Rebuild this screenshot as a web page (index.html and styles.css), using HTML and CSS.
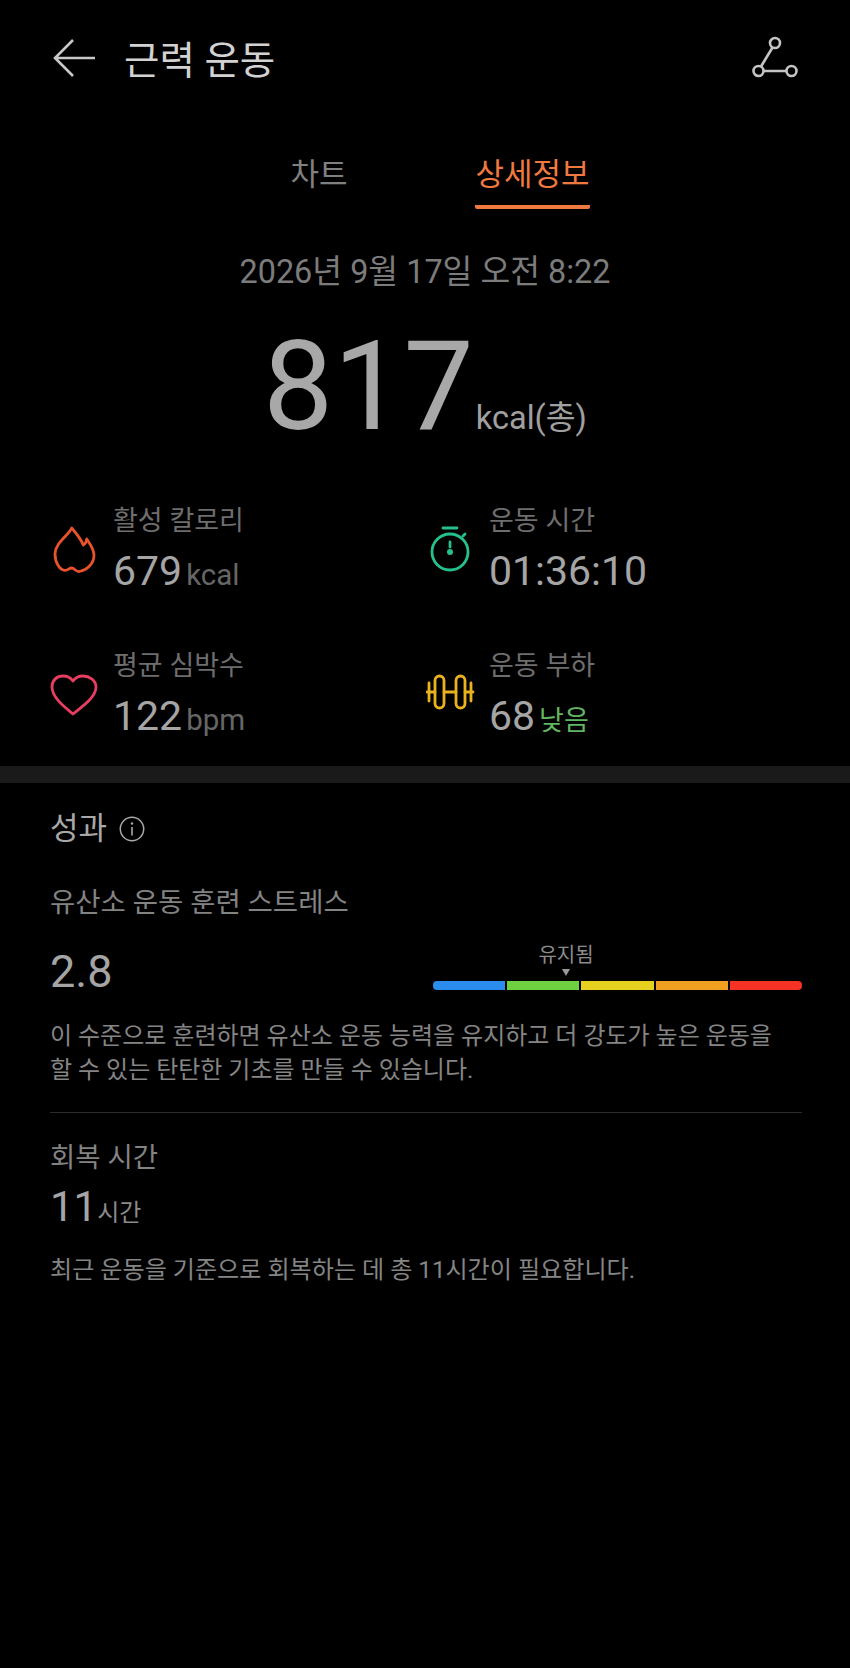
FILE: index.html
```html
<!DOCTYPE html>
<html lang="ko">
<head>
<meta charset="utf-8">
<title>근력 운동</title>
<link rel="stylesheet" href="styles.css">
</head>
<body>
<header class="topbar">
	<svg class="back" width="44" height="40" viewBox="0 0 44 40"><path d="M20 2 L2 20 L20 38 M2 20 H42" fill="none" stroke="#c8c8c8" stroke-width="2.6"/></svg>
	<h1 class="title">근력 운동</h1>
	<svg class="route" width="48" height="44" viewBox="0 0 48 44"><g fill="none" stroke="#c4c4c4" stroke-width="2.6"><circle cx="23" cy="7" r="5"/><circle cx="6.500" cy="35" r="5"/><circle cx="39.500" cy="35" r="5"/><path d="M20.500 11.500 L9 30.500 M11.500 35 H34.500"/></g></svg>
</header>
<nav class="tabs">
	<span class="tab">차트</span>
	<span class="tab tab-on">상세정보</span>
</nav>
<div class="date">2026년 9월 17일 오전 8:22</div>
<div class="total"><span class="total-num">817</span><span class="total-unit">kcal(총)</span></div>
<section class="stats">
	<div class="stat">
		<svg class="stat-icon" width="50" height="54" viewBox="0 0 50 54"><path d="M21.700 4 C19 11 5 19 5 30 C5 39 10 46 15 46.300 C18 46.500 19 44 21.700 44 C24.500 44 26 48 29.300 47.500 C37 46 44 40 44 31 C44 25 40 20 36.700 15 C36.500 18 35 20 33.300 21 C31 15 26 9 21.700 4Z" fill="none" stroke="#e8532b" stroke-width="2.800" stroke-linejoin="round"/></svg>
		<div>
			<div class="stat-label">활성 칼로리</div>
			<div class="stat-value">679<span class="stat-unit">kcal</span></div>
		</div>
	</div>
	<div class="stat">
		<svg class="stat-icon" width="50" height="54" viewBox="0 0 50 54"><g fill="none" stroke="#25c08e" stroke-width="2.800" stroke-linecap="round"><circle cx="24" cy="28" r="18"/><path d="M17 4 H31 M37 12 L39 10 M24 18 V23"/></g><circle cx="24" cy="28" r="3" fill="#25c08e"/></svg>
		<div>
			<div class="stat-label">운동 시간</div>
			<div class="stat-value">01:36:10</div>
		</div>
	</div>
	<div class="stat">
		<svg class="stat-icon" width="50" height="54" viewBox="0 0 50 54"><path d="M23 45 C16 39 2 29 2 18 C2 11 7 7 13 7 C17 7 21 9 23 12 C25 9 29 7 33 7 C39 7 46 11 46 18 C46 29 30 39 23 45Z" fill="none" stroke="#e63d60" stroke-width="2.800" stroke-linejoin="round"/></svg>
		<div>
			<div class="stat-label">평균 심박수</div>
			<div class="stat-value">122<span class="stat-unit">bpm</span></div>
		</div>
	</div>
	<div class="stat">
		<svg class="stat-icon" width="50" height="54" viewBox="0 0 50 54"><g fill="none" stroke="#eab21e" stroke-width="2.800" stroke-linecap="round"><rect x="9" y="7" width="9" height="32" rx="4.500"/><rect x="30" y="7" width="9" height="32" rx="4.500"/><path d="M18 23 H30 M3 14 V32 M45 14 V32 M1 23 H3 M45 23 H47 M3 23 H9 M39 23 H45"/></g></svg>
		<div>
			<div class="stat-label">운동 부하</div>
			<div class="stat-value">68<span class="stat-level">낮음</span></div>
		</div>
	</div>
</section>
<div class="band"></div>
<section class="perf">
	<div class="perf-head">
		<h2 class="perf-title">성과</h2>
		<svg width="26" height="26" viewBox="0 0 26 26"><circle cx="13" cy="13" r="11.700" fill="none" stroke="#a8a8a8" stroke-width="1.500"/><path d="M13 11 V19.500" stroke="#a8a8a8" stroke-width="1.600"/><circle cx="13" cy="7.500" r="1.200" fill="#a8a8a8"/></svg>
	</div>
	<div class="perf-label">유산소 운동 훈련 스트레스</div>
	<div class="load">
		<div class="load-num">2.8</div>
		<div class="scale">
			<div class="scale-marker">
				<span class="scale-text">유지됨</span>
				<span class="scale-arrow"></span>
			</div>
			<div class="scale-bar">
				<span class="seg seg-blue"></span>
				<span class="seg seg-green"></span>
				<span class="seg seg-yellow"></span>
				<span class="seg seg-orange"></span>
				<span class="seg seg-red"></span>
			</div>
		</div>
	</div>
	<p class="note">이 수준으로 훈련하면 유산소 운동 능력을 유지하고 더 강도가 높은 운동을<br>할 수 있는 탄탄한 기초를 만들 수 있습니다.</p>
	<div class="rule"></div>
	<div class="perf-label recover-label">회복 시간</div>
	<div class="recover"><span class="recover-num">11</span><span class="recover-unit">시간</span></div>
	<p class="note recover-note">최근 운동을 기준으로 회복하는 데 총 11시간이 필요합니다.</p>
</section>
</body>
</html>
```

FILE: styles.css
```css
*{
	margin: 0;
	padding: 0;
	box-sizing: border-box;
}
html,body{
	background: #000;
}
body{
	width: 850px;
	height: 1668px;
	overflow: hidden;
	font-family: Roboto, "Noto Sans CJK KR", sans-serif;
	color: #a8a8a8;
}
.topbar{
	height: 116px;
	padding: 0 50px 0 53px;
	display: flex;
	align-items: center;
}
.title{
	margin: 0 0 3px 27px;
	font-size: 38.500px;
	font-weight: 400;
	color: #d2d2d2;
}
.route{
	margin-left: auto;
}
.tabs{
	margin-top: 24px;
	display: flex;
	justify-content: center;
	gap: 128px;
	padding-left: 30px;
}
.tab{
	font-size: 31px;
	line-height: 69px;
	height: 69px;
	color: #808080;
}
.tab-on{
	color: #f0793f;
	border-bottom: 4px solid #f0793f;
	border-radius: 0 0 2px 2px;
}
.date{
	margin-top: 41px;
	text-align: center;
	font-size: 32.400px;
	line-height: 44px;
	color: #7c7c7c;
}
.total{
	margin-top: 18px;
	height: 149px;
	display: flex;
	justify-content: center;
	align-items: baseline;
}
.total-num{
	font-size: 125px;
	font-weight: 400;
	line-height: 150px;
	color: #a8a8a8;
}
.total-unit{
	margin-left: 2px;
	font-size: 32.500px;
	color: #a0a0a0;
}
.stats{
	margin-top: 40px;
	padding-left: 50px;
	display: grid;
	grid-template-columns: 376px 1fr;
	row-gap: 45px;
}
.stat{
	display: flex;
	align-items: center;
	gap: 13px;
}
.stat-label{
	font-size: 27px;
	line-height: 40px;
	color: #6e6e6e;
}
.stat-value{
	height: 60px;
	display: flex;
	align-items: baseline;
	font-size: 41px;
	line-height: 60px;
	color: #a5a5a5;
}
.stat-unit{
	margin-left: 4px;
	font-size: 29.500px;
	color: #666;
}
.stat-level{
	margin-left: 4px;
	font-size: 27px;
	color: #62b562;
}
.band{
	margin-top: 20px;
	height: 17px;
	background: #1a1a1a;
}
.perf{
	padding: 0 48px 0 50px;
}
.perf-head{
	margin-top: 26px;
	display: flex;
	align-items: center;
	gap: 12px;
}
.perf-title{
	font-size: 31px;
	line-height: 40px;
	font-weight: 400;
	color: #a8a8a8;
}
.perf-label{
	margin-top: 34px;
	font-size: 27.500px;
	line-height: 40px;
	color: #838383;
}
.load{
	display: flex;
	justify-content: space-between;
	align-items: flex-start;
	margin-top: 18px;
}
.load-num{
	font-size: 45px;
	line-height: 62px;
	color: #a5a5a5;
}
.scale{
	width: 369px;
}
.scale-marker{
	margin-left: 100px;
	width: 66px;
	display: flex;
	flex-direction: column;
	align-items: center;
}
.scale-text{
	font-size: 20px;
	line-height: 28px;
	color: #8c8c8c;
}
.scale-arrow{
	width: 0;
	height: 0;
	border-left: 4px solid transparent;
	border-right: 4px solid transparent;
	border-top: 7px solid #9a9a9a;
	margin-bottom: 5px;
}
.scale-bar{
	display: flex;
	gap: 2px;
	height: 9px;
}
.seg{
	flex: 1;
}
.seg-blue{
	background: #2a8dee;
	border-radius: 4px 0 0 4px;
}
.seg-green{
	background: #6fd13f;
}
.seg-yellow{
	background: #e6d020;
}
.seg-orange{
	background: #efa020;
}
.seg-red{
	background: #f53224;
	border-radius: 0 4px 4px 0;
}
.note{
	margin-top: 16px;
	font-size: 24px;
	line-height: 34px;
	color: #858585;
	white-space: nowrap;
}
.rule{
	margin-top: 25px;
	height: 1px;
	background: #2c2c2c;
}
.recover-label{
	margin-top: 25px;
}
.recover{
	margin-top: 3px;
	line-height: 52px;
}
.recover-num{
	font-size: 42px;
	color: #a5a5a5;
}
.recover-unit{
	font-size: 24px;
	color: #8a8a8a;
}
.recover-note{
	margin-top: 11px;
	font-size: 24.100px;
}
```
